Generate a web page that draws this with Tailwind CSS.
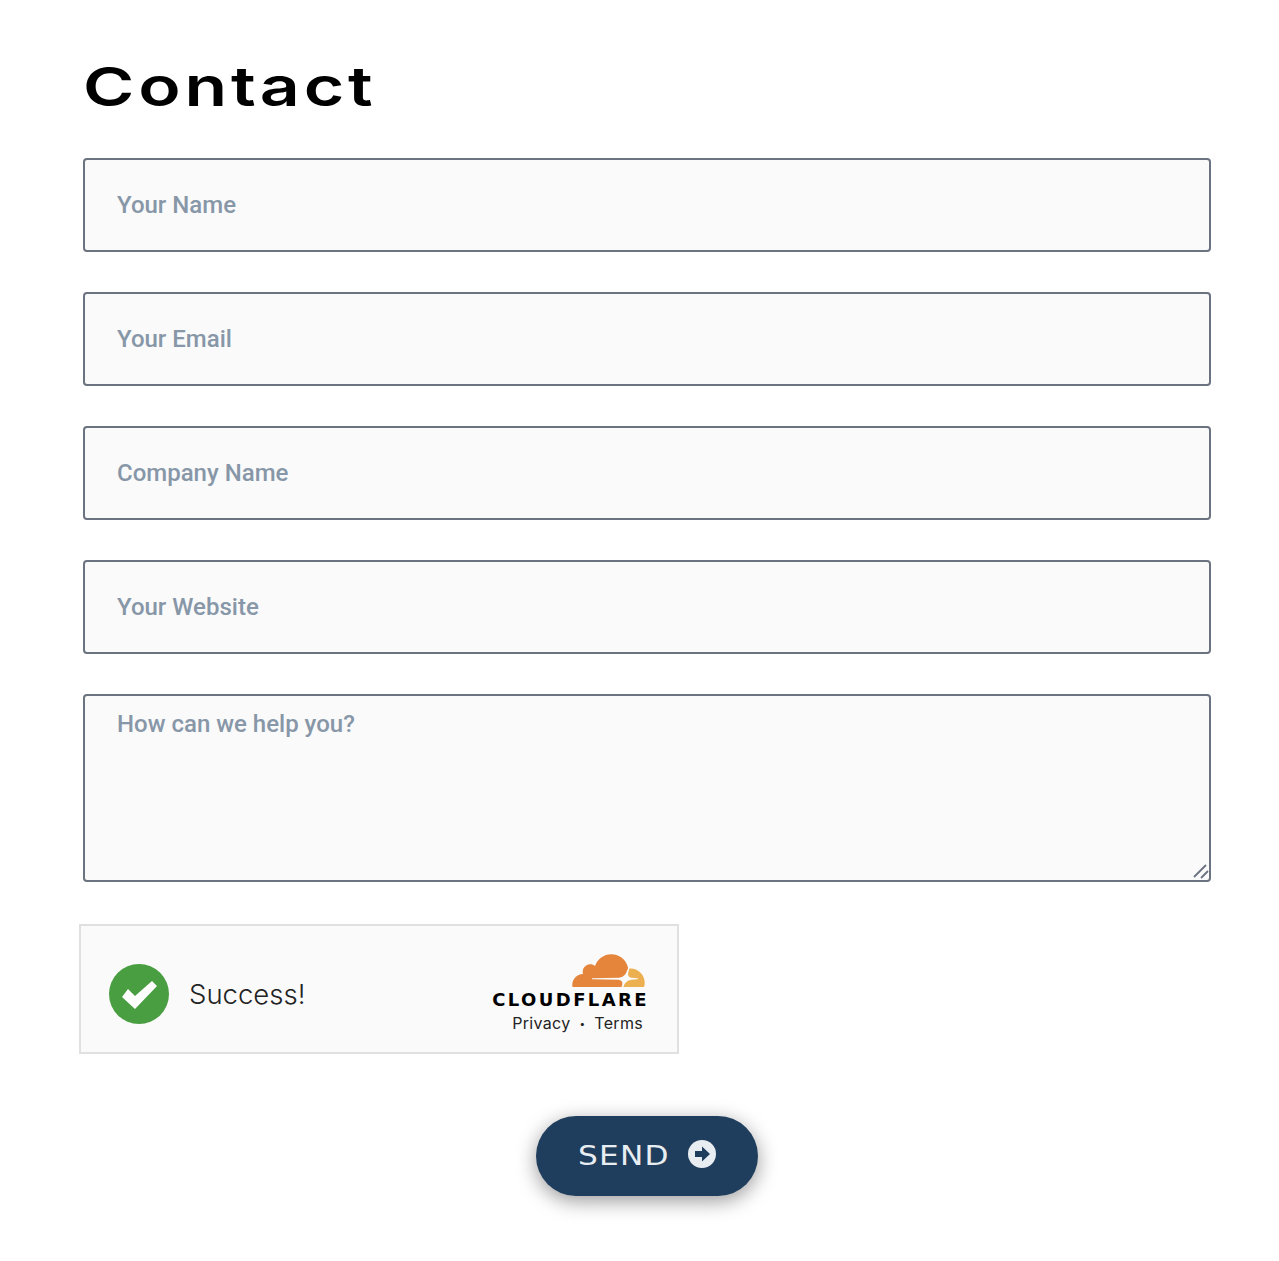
<!DOCTYPE html>
<html lang="en">
<head>
    <meta charset="UTF-8">
    <meta name="viewport" content="width=device-width, initial-scale=1.0">
    <title>Contact</title>
    <script src="https://cdn.jsdelivr.net/npm/@tailwindcss/browser@4"></script>
</head>
<body class="bg-white">
    <main class="h-[1261px] overflow-hidden pl-[83px] pr-[68px] pt-[52px]">
        <h1 class="h-[106px] origin-left scale-x-[1.29] font-['Inter',sans-serif] text-[54px] leading-[70px] font-semibold tracking-[3px] text-black">Contact</h1>

        <form class="flex flex-col gap-10">
            <input type="text" placeholder="Your Name" class="h-[94px] w-full rounded border-2 border-[#6b7280] bg-[#fafafa] px-8 font-['Roboto',sans-serif] text-2xl font-medium placeholder:text-[#8797a8]">
            <input type="email" placeholder="Your Email" class="h-[94px] w-full rounded border-2 border-[#6b7280] bg-[#fafafa] px-8 font-['Roboto',sans-serif] text-2xl font-medium placeholder:text-[#8797a8]">
            <input type="text" placeholder="Company Name" class="h-[94px] w-full rounded border-2 border-[#6b7280] bg-[#fafafa] px-8 font-['Roboto',sans-serif] text-2xl font-medium placeholder:text-[#8797a8]">
            <input type="text" placeholder="Your Website" class="h-[94px] w-full rounded border-2 border-[#6b7280] bg-[#fafafa] px-8 font-['Roboto',sans-serif] text-2xl font-medium placeholder:text-[#8797a8]">
            <div class="relative">
                <textarea placeholder="How can we help you?" class="block h-[188px] w-full resize-none rounded border-2 border-[#6b7280] bg-[#fafafa] px-8 py-[10px] font-['Roboto',sans-serif] text-2xl leading-[36px] font-medium placeholder:text-[#8797a8]"></textarea>
                <!-- resize grip -->
                <svg class="absolute right-[2px] bottom-[3px] h-[16px] w-[16px]" viewBox="0 0 16 16">
                    <path d="M1 14 L13 2 M8 15 L15 8" fill="none" stroke="#6b7280" stroke-width="1.8"/>
                </svg>
            </div>

            <!-- turnstile widget -->
            <div class="mt-[2px] ml-[-4px] flex h-[130px] w-[600px] items-center justify-between border-2 border-[#e0e0e0] bg-[#fafafa] pt-[10px] pr-[30px] pl-[28px]">
                <div class="flex items-center gap-5">
                    <svg class="h-[60px] w-[60px]" viewBox="0 0 60 60">
                        <circle cx="30" cy="30" r="30" fill="#4a9e42"/>
                        <polygon points="13,33 19,25 26,32 43,17 48,22 26,45" fill="#fff"/>
                    </svg>
                    <span class="pt-[2px] font-['Inter',sans-serif] text-[27.5px] font-[350] text-[#232323]">Success!</span>
                </div>
                <div class="flex flex-col items-end pt-[1px]">
                    <svg class="mr-[2px] h-[33px] w-[73px]" viewBox="0 6.5 24 10.93">
                        <path fill="#e5853b" d="M16.5088 16.8447c.1475-.5068.0908-.9707-.1553-1.3154-.2246-.3164-.6045-.499-1.0615-.5205l-8.6592-.1123a.1559.1559 0 0 1-.1333-.0713c-.0283-.042-.0351-.0986-.021-.1553.0278-.084.1123-.1484.2036-.1562l8.7359-.1123c1.0351-.0489 2.1601-.8868 2.5537-1.9136l.499-1.3013c.0215-.0561.0293-.1128.0147-.168-.5625-2.5463-2.835-4.4453-5.5499-4.4453-2.5039 0-4.6284 1.6177-5.3876 3.8614-.4927-.3658-1.1187-.5625-1.794-.499-1.2026.119-2.1665 1.083-2.2861 2.2856-.0283.31-.0069.6128.0635.894C1.5683 13.171 0 14.7754 0 16.752c0 .1748.0142.3515.0352.5273.0141.083.0844.1475.1689.1475h15.9814c.0909 0 .1758-.0645.2032-.1553l.12-.4268z"/>
                        <path fill="#edb050" d="M19.2656 11.2813c-.0771 0-.1611 0-.2383.0112-.0566 0-.1054.0415-.127.0976l-.3378 1.1744c-.1475.5068-.0918.9707.1543 1.3164.2256.3164.6055.498 1.0625.5195l1.8437.1133c.0557 0 .1055.0263.1329.0703.0283.043.0351.1074.0214.1562-.0283.084-.1132.1485-.204.1553l-1.921.1123c-1.041.0488-2.1582.8867-2.5527 1.914l-.1406.3585c-.0283.0713.0215.1416.0986.1416h6.5977c.0771 0 .1474-.0489.169-.126.1122-.4082.1757-.837.1757-1.2803 0-2.6025-2.125-4.727-4.7344-4.727"/>
                    </svg>
                    <span class="mt-[3px] mr-[-2px] font-['DejaVu_Sans',sans-serif] text-[18px] leading-[20px] font-bold tracking-[2.4px] text-black">CLOUDFLARE</span>
                    <span class="mt-[1px] mr-[4px] flex items-center gap-[9px] font-['Inter',sans-serif] text-[16px] leading-[24px] tracking-[0.3px] text-[#232323]">
                        Privacy
                        <span class="text-[10px]">•</span>
                        Terms
                    </span>
                </div>
            </div>

            <div class="mt-[22px] flex justify-center">
                <button type="button" class="flex h-20 w-[222px] items-center justify-center gap-[21px] rounded-full bg-[#1f3d5c] font-['DejaVu_Sans',sans-serif] text-[26px] text-[#e8edf2] shadow-[0_5px_20px_rgba(0,0,0,0.4)]">
                    <span class="inline-block w-[89px] origin-left scale-x-[1.2] text-left tracking-[1px]">SEND</span>
                    <svg class="h-7 w-7 -translate-y-0.5" viewBox="0 0 28 28">
                        <circle cx="14" cy="14" r="14" fill="#e8edf2"/>
                        <path d="M7 11 H14 V6.5 L22 14 L14 21.5 V17 H7 Z" fill="#1f3d5c"/>
                    </svg>
                </button>
            </div>
        </form>
    </main>
</body>
</html>
